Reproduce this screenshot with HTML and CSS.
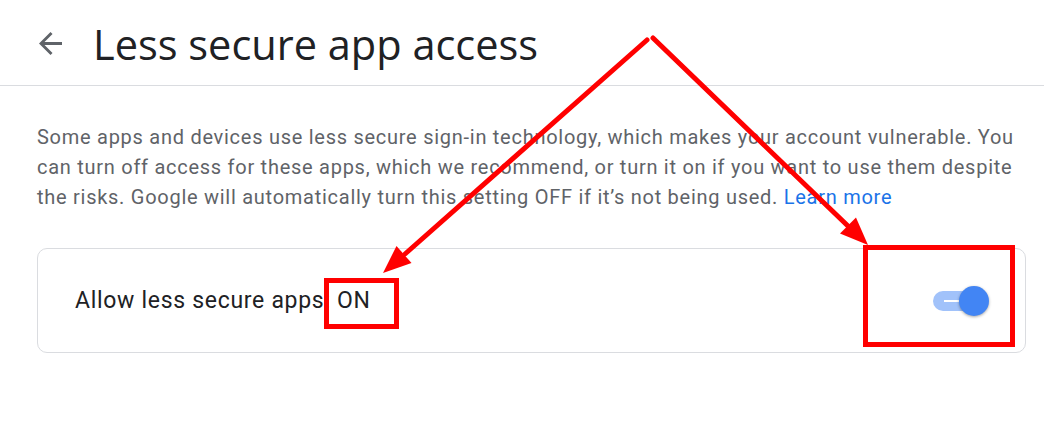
FILE: index.html
```html
<!DOCTYPE html>
<html lang="en">
<head>
<meta charset="utf-8">
<title>Less secure app access</title>
<link rel="stylesheet" href="styles.css">
</head>
<body>
<div class="page">
  <header class="header">
    <button class="back" aria-label="Back">
      <svg viewBox="4 4 16 16" width="23" height="23"><path fill="#5f6368" d="M20 11H7.83l5.59-5.59L12 4l-8 8 8 8 1.41-1.41L7.83 13H20v-2z"/></svg>
    </button>
    <h1 class="title">Less secure app access</h1>
  </header>
  <main class="content">
    <p class="intro">Some apps and devices use less secure sign-in technology, which makes your account vulnerable. You can turn off access for these apps, which we recommend, or turn it on if you want to use them despite the risks. Google will automatically turn this setting OFF if it’s not being used. <a class="link" href="#">Learn more</a></p>
    <section class="card">
      <span class="label">Allow less secure apps: ON</span>
      <span class="toggle" role="switch" aria-checked="true">
        <span class="track"><span class="mark"></span></span>
        <span class="thumb"></span>
      </span>
    </section>
  </main>
  <svg class="annot" width="1044" height="426" viewBox="0 0 1044 426">
    <g stroke="#ff0000" stroke-width="5" fill="none" stroke-linecap="round">
      <line x1="647" y1="40" x2="405" y2="254"/>
      <line x1="653" y1="38" x2="849" y2="227"/>
      <rect x="326.5" y="280.5" width="70" height="46"/>
      <rect x="865.5" y="247.5" width="147" height="97"/>
    </g>
    <g fill="#ff0000">
      <polygon points="383,273 411.5,263 396.5,246"/>
      <polygon points="868,245 840,233.5 856,217.5"/>
    </g>
  </svg>
</div>
</body>
</html>
```
FILE: styles.css
```css
html, body {
  margin: 0;
  padding: 0;
  background: #ffffff;
}
.page {
  position: relative;
  width: 1044px;
  height: 426px;
  overflow: hidden;
  font-family: Roboto, "Liberation Sans", sans-serif;
}
.header {
  display: flex;
  align-items: center;
  height: 86px;
  border-bottom: 1px solid #dadce0;
  box-sizing: border-box;
  padding-left: 38px;
  padding-top: 2px;
}
.back {
  display: flex;
  align-items: center;
  justify-content: center;
  padding: 0;
  border: 0;
  background: none;
  width: 24px;
  height: 24px;
  margin-right: 31px;
}
.title {
  margin: 0;
  font-family: "Open Sans", Roboto, sans-serif;
  font-weight: 400;
  font-size: 41.5px;
  color: #202124;
}
.content {
  padding: 0 18px 0 37px;
}
.intro {
  margin: 36px 0 36px;
  font-size: 20px;
  letter-spacing: 0.73px;
  line-height: 30px;
  color: #5f6368;
}
.link {
  color: #1a73e8;
  text-decoration: none;
}
.card {
  display: flex;
  align-items: center;
  justify-content: space-between;
  height: 105px;
  box-sizing: border-box;
  border: 1px solid #dadce0;
  border-radius: 10px;
  padding: 0 36px 0 37px;
}
.label {
  font-size: 23px;
  letter-spacing: 0.7px;
  color: #202124;
}
.toggle {
  position: relative;
  display: block;
  width: 56px;
  height: 30px;
}
.track {
  position: absolute;
  left: 0;
  top: 5px;
  width: 46px;
  height: 20px;
  border-radius: 10px;
  background: #a1c2fa;
}
.mark {
  position: absolute;
  left: 11px;
  top: 9px;
  width: 16px;
  height: 2px;
  background: #ffffff;
}
.thumb {
  position: absolute;
  right: 0;
  top: 0;
  width: 30px;
  height: 30px;
  border-radius: 50%;
  background: #4285f4;
  box-shadow: 0 1px 3px rgba(0, 0, 0, 0.35);
}
.annot {
  position: absolute;
  left: 0;
  top: 0;
  pointer-events: none;
}
```
